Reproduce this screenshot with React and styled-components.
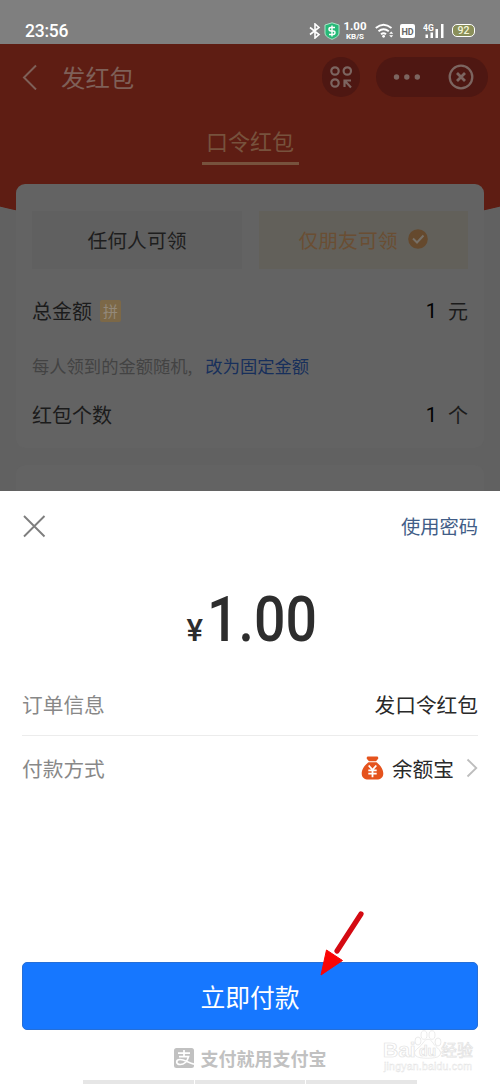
import React from "react";
import styled, { createGlobalStyle } from "styled-components";

const cjk = `"Noto Sans CJK SC", sans-serif`;

const Global = createGlobalStyle`
  * { box-sizing: border-box; }
  body { margin: 0; background: #fff; font-family: ${cjk}; }
  svg { display: block; flex: none; }
`;

const Screen = styled.main`
  position: relative;
  display: flex;
  flex-direction: column;
  width: 500px;
  height: 1084px;
  overflow: hidden;
  background: #fff;
`;

const StatusBar = styled.header`
  display: flex;
  align-items: center;
  height: 44px;
  flex: none;
  padding: 17px 25px 0;
  background: #7f7f7f;
  color: #fff;
`;

const Clock = styled.time`
  font: 500 17.5px/26px Roboto, sans-serif;
  letter-spacing: -0.25px;
  margin-right: auto;
`;

const StatusIcons = styled.div`
  display: flex;
  align-items: center;
`;

const Speed = styled.div`
  display: flex;
  flex-direction: column;
  align-items: center;
  width: 24px;
  margin: 0 8px 0 3px;
  font: 700 11.5px/12px Roboto, sans-serif;
  white-space: nowrap;
`;

const SpeedUnit = styled.span`
  font-size: 8px;
  line-height: 9px;
`;

const Battery = styled.div`
  width: 23px;
  height: 13px;
  margin-left: 8px;
  border: 1.6px solid #fff;
  border-radius: 5px;
  background: #8a8f5a;
  color: #f4f5d8;
  text-align: center;
  font: 500 10.5px/11px Roboto, sans-serif;
`;

const DimmedPage = styled.section`
  display: flex;
  flex-direction: column;
  height: 447px;
  flex: none;
  overflow: hidden;
  background: radial-gradient(ellipse 480px 191px at 250px 0, #5e1d13 99.6%, #616161 100%);
`;

const NavBar = styled.nav`
  display: flex;
  align-items: center;
  height: 66px;
  flex: none;
  padding: 0 12px 0 22px;
`;

const NavTitle = styled.h1`
  margin: 0 auto 0 24px;
  font-size: 24.4px;
  line-height: 36px;
  font-weight: 400;
  color: #7e6058;
`;

const NavPill = styled.div`
  display: flex;
  align-items: center;
  justify-content: ${(p) => (p.$wide ? "space-between" : "center")};
  width: ${(p) => (p.$wide ? 112 : 38)}px;
  height: 40px;
  margin-left: ${(p) => (p.$wide ? 16 : 0)}px;
  padding: ${(p) => (p.$wide ? "0 14px 0 17px" : 0)};
  border-radius: 20px;
  background: #4e1712;
`;

const Tab = styled.div`
  align-self: center;
  flex: none;
  width: 97px;
  height: 55px;
  margin-bottom: 19px;
  padding-top: 13px;
  border-bottom: 3px solid #77523d;
  text-align: center;
  font-size: 22px;
  line-height: 34px;
  color: #77523d;
`;

const Card = styled.div`
  height: ${(p) => p.$height}px;
  flex: none;
  margin: 0 16px ${(p) => (p.$last ? 0 : 17)}px;
  padding: ${(p) => (p.$last ? 0 : "27px 16px 0")};
  border-radius: 9px;
  background: #636363;
`;

const Choices = styled.div`
  display: flex;
  gap: 17px;
  height: 58px;
`;

const Choice = styled.div`
  display: flex;
  align-items: center;
  justify-content: center;
  gap: 11px;
  width: ${(p) => (p.$active ? 209 : 210)}px;
  padding-bottom: 2px;
  background: ${(p) => (p.$active ? "#62605a" : "#606060")};
  color: ${(p) => (p.$active ? "#6a4e33" : "#1e1e1e")};
  font-size: 19.8px;
`;

const FieldRow = styled.div`
  display: flex;
  align-items: center;
  height: 30px;
  margin-top: ${(p) => p.$top}px;
  font-size: 20px;
  line-height: 30px;
  color: #1b1b1b;
`;

const Badge = styled.span`
  display: flex;
  align-items: center;
  justify-content: center;
  width: 21px;
  height: 22px;
  margin-left: 8px;
  border-radius: 2px;
  background: #7c6847;
  color: #93897a;
  font-size: 15px;
`;

const Amount = styled.span`
  margin: 0 11px 0 auto;
  color: #000;
  font: 400 20px/30px Roboto, sans-serif;
`;

const Hint = styled.p`
  margin: 27px 0 0;
  height: 26px;
  font-size: 17.3px;
  line-height: 26px;
  color: #434343;
`;

const HintLink = styled.span`
  margin-left: 13px;
  color: #172f5b;
`;

const Sheet = styled.section`
  display: flex;
  flex-direction: column;
  height: 593px;
  flex: none;
  padding: 0 22px;
  background: #fff;
`;

const SheetHeader = styled.div`
  display: flex;
  align-items: center;
  justify-content: space-between;
  height: 70px;
  flex: none;
  font-size: 19.3px;
  color: #425d87;
`;

const Total = styled.div`
  display: flex;
  align-items: baseline;
  justify-content: center;
  height: 112px;
  flex: none;
  padding-top: 22px;
  color: #2d2d2d;
  font: 500 63px/74px Roboto, sans-serif;
`;

const Currency = styled.span`
  width: 20px;
  margin-left: 1px;
  font-size: 31px;
`;

const Figures = styled.span`
  width: 108px;
  transform: scaleX(0.88);
  transform-origin: left;
`;

const DetailRow = styled.div`
  display: flex;
  align-items: center;
  height: ${(p) => p.$height}px;
  flex: none;
  border-bottom: ${(p) => (p.$line ? "1px solid #ececec" : "0")};
  font-size: 20.7px;
  color: #888;
`;

const DetailValue = styled.span`
  display: flex;
  align-items: center;
  margin-left: auto;
  color: #292929;
`;

const Method = styled.span`
  margin: 0 12px 0 8px;
`;

const PayButton = styled.button`
  height: 68px;
  flex: none;
  margin: 163px 0 0;
  padding: 0;
  border: 1px solid #256fd8;
  border-radius: 5px;
  background: #1677ff;
  color: #fff;
  font: 400 24.8px/66px ${cjk};
`;

const Brand = styled.footer`
  display: flex;
  align-items: center;
  justify-content: center;
  gap: 7px;
  height: 50px;
  padding-top: 5px;
  font-size: 18px;
  font-weight: 700;
  color: #c1c1c1;
`;

const NextStrip = styled.div`
  display: flex;
  gap: 1px;
  height: 4px;
  flex: none;
  margin: 0 61px 0 61px;
`;

const StripCell = styled.span`
  width: 111px;
  background: #e6e6e6;
`;

const Pointer = styled.svg`
  position: absolute;
  left: 314px;
  top: 906px;
`;

const Watermark = styled.svg`
  position: absolute;
  left: 380px;
  top: 1028px;
`;

const BluetoothIcon = () => (
  <svg width="12" height="16" viewBox="0 0 12 16" fill="none" stroke="#fff" strokeWidth="1.6">
    <path d="M1 4.5 10 11.5 6 15V1l4 3.5L1 11.5" />
  </svg>
);

const ShieldIcon = () => (
  <svg width="16" height="18" viewBox="0 0 16 18" style={{ marginLeft: 3 }}>
    <path d="M8 .8 15 3v8c0 3-3.5 5-7 6.3C4.500 16 1 14 1 11V3Z" fill="#27b978" stroke="#a8e6c8" />
    <path d="M11 5.500H7q-2 0-2 1.700T7 9h2q2 0 2 1.700t-2 1.800H5M8 3.500v11" fill="none" stroke="#fff" strokeWidth="1.400" />
  </svg>
);

const WifiIcon = () => (
  <svg width="19" height="15" viewBox="0 0 19 15" fill="none" stroke="#fff" strokeWidth="1.900">
    <path d="M.8 5Q8.500-1.600 16.500 5M3.500 8.300q5-4.300 10.300 0M6 11.300q2.600-2.200 5 0" />
    <circle cx="8.600" cy="13.300" r="1.400" fill="#fff" stroke="none" />
    <path d="m14.200 10.800 2-2.300 2 2.300Zm0 1.500 2 2.300 2-2.300Z" fill="#fff" stroke="none" />
  </svg>
);

const HdIcon = () => (
  <svg width="15" height="14" viewBox="0 0 15 14" style={{ marginLeft: 6 }}>
    <rect width="15" height="14" rx="2" fill="#fff" />
    <text x="7.500" y="10.500" textAnchor="middle" fontFamily="Roboto" fontWeight="700" fontSize="9" fill="#666">HD</text>
  </svg>
);

const SignalIcon = () => (
  <svg width="21" height="16" viewBox="0 0 21 16" fill="#fff" style={{ marginLeft: 8 }}>
    <text x="0" y="8" fontFamily="Roboto" fontWeight="700" fontSize="8.500">4G</text>
    <path d="M2.500 11.500h2.500v3.500H2.500ZM7.500 9.500H10V15H7.500ZM12.500 6H15v9h-2.500ZM18 1h2.500v14H18Z" />
  </svg>
);

const BackIcon = () => (
  <svg width="15" height="26" viewBox="0 0 15 26" fill="none" stroke="#7e6058" strokeWidth="2">
    <path d="M14 1.500 2 13.500l12 12" />
  </svg>
);

const AppsIcon = () => (
  <svg width="24" height="24" viewBox="0 0 24 24" fill="none" stroke="#7c6560" strokeWidth="2.200">
    <circle cx="6" cy="6" r="3.700" />
    <circle cx="18.300" cy="6" r="3.700" />
    <circle cx="6" cy="18" r="3.700" />
    <path d="M15.500 22v-6.500H22M16 16l6 6.500" />
  </svg>
);

const MoreIcon = () => (
  <svg width="28" height="8" viewBox="0 0 28 8" fill="#7c6560">
    <circle cx="3.500" cy="4" r="2.700" />
    <circle cx="13.800" cy="4" r="2.700" />
    <circle cx="24.300" cy="4" r="2.700" />
  </svg>
);

const CloseCircleIcon = () => (
  <svg width="26" height="26" viewBox="0 0 26 26" fill="none" stroke="#7c6560" strokeWidth="2.300">
    <circle cx="13" cy="13" r="11.300" />
    <path d="m9 9 8 8m0-8-8 8" strokeWidth="2.800" />
  </svg>
);

const CheckIcon = () => (
  <svg width="20" height="20" viewBox="0 0 20 20">
    <circle cx="10" cy="10" r="9.800" fill="#65492d" />
    <path d="m5 9.500 4 4 6.500-7" fill="none" stroke="#777067" strokeWidth="2" />
  </svg>
);

const CloseIcon = () => (
  <svg width="24" height="24" viewBox="0 0 24 24" fill="none" stroke="#7e7e7e" strokeWidth="1.900">
    <path d="m2 2 20.500 20.500M22.500 2 2 22.500" />
  </svg>
);

const MoneyBagIcon = () => (
  <svg width="23" height="24" viewBox="0 0 23 24">
    <path d="M6.500.5h10q1.500 1.300.2 2.800L15 5.200H8L6.200 3.300Q5 1.800 6.500.5ZM7.500 6.300h8c4 3 6.800 7.300 6.800 11.200 0 4-3 6-6.500 6H7.200c-3.500 0-6.500-2-6.500-6 0-3.900 2.800-8.200 6.800-11.200Z" fill="#e5531d" />
    <path d="m7.700 9.500 3.800 4.300 3.800-4.300M11.500 13.500v7.700M7.300 14.300h8.400M7.300 17.600h8.400" fill="none" stroke="#fff" strokeWidth="1.800" />
  </svg>
);

const ChevronIcon = () => (
  <svg width="12" height="20" viewBox="0 0 12 20" fill="none" stroke="#bdbdbd" strokeWidth="1.800">
    <path d="m1.500 1.500 8.800 8.500-8.800 8.500" />
  </svg>
);

const AlipayIcon = () => (
  <svg width="20" height="20" viewBox="0 0 20 20">
    <rect width="20" height="20" rx="2.500" fill="#c1c1c1" />
    <path d="M4 5.200h12M10 2v6.500M5 8.700h9.500c-1.200 4.500-4.500 7.800-8.200 7.800-5 0-4.500-5-.3-5 4.300 0 8 3 14 4.700" fill="none" stroke="#fff" strokeWidth="1.700" />
  </svg>
);

export default function App() {
  return (
    <Screen>
      <Global />
      <StatusBar>
        <Clock>23:56</Clock>
        <StatusIcons>
          <BluetoothIcon />
          <ShieldIcon />
          <Speed>
            <span>1.00</span>
            <SpeedUnit>KB/S</SpeedUnit>
          </Speed>
          <WifiIcon />
          <HdIcon />
          <SignalIcon />
          <Battery>92</Battery>
        </StatusIcons>
      </StatusBar>

      <DimmedPage>
        <NavBar>
          <BackIcon />
          <NavTitle>发红包</NavTitle>
          <NavPill><AppsIcon /></NavPill>
          <NavPill $wide>
            <MoreIcon />
            <CloseCircleIcon />
          </NavPill>
        </NavBar>
        <Tab>口令红包</Tab>
        <Card $height={264}>
          <Choices>
            <Choice>任何人可领</Choice>
            <Choice $active>仅朋友可领<CheckIcon /></Choice>
          </Choices>
          <FieldRow $top={27}>
            总金额<Badge>拼</Badge>
            <Amount>1</Amount>元
          </FieldRow>
          <Hint>每人领到的金额随机,<HintLink>改为固定金额</HintLink></Hint>
          <FieldRow $top={21}>
            红包个数
            <Amount>1</Amount>个
          </FieldRow>
        </Card>
        <Card $height={40} $last />
      </DimmedPage>

      <Sheet>
        <SheetHeader>
          <CloseIcon />
          <span>使用密码</span>
        </SheetHeader>
        <Total>
          <Currency>¥</Currency>
          <Figures>1.00</Figures>
        </Total>
        <DetailRow $height={63} $line>
          订单信息
          <DetailValue>发口令红包</DetailValue>
        </DetailRow>
        <DetailRow $height={63}>
          付款方式
          <DetailValue>
            <MoneyBagIcon />
            <Method>余额宝</Method>
            <ChevronIcon />
          </DetailValue>
        </DetailRow>
        <PayButton>立即付款</PayButton>
        <Brand>
          <AlipayIcon />
          支付就用支付宝
        </Brand>
        <NextStrip>
          <StripCell />
          <StripCell />
          <StripCell />
        </NextStrip>
      </Sheet>

      <Pointer width="54" height="72" viewBox="0 0 54 72">
        <path d="M47 8 23 45" stroke="#d40a12" strokeWidth="5.200" strokeLinecap="round" />
        <path d="M7 69 12.500 44l16 10.500Z" fill="#fa0505" stroke="#fa0505" strokeLinejoin="round" />
      </Pointer>

      <Watermark width="100" height="48" viewBox="0 0 100 48" fill="#fff" stroke="#e2e2e2" strokeWidth="0.700">
        <text x="3" y="29" fontFamily="Liberation Sans" fontWeight="700" fontSize="21">Bai</text>
        <path d="M36 28c-5-5 4-8 7-13 3-5 7-5 10 0 3 5 11 8 6 13-3 3-20 3-23 0Z" />
        <ellipse cx="38" cy="13" rx="3" ry="4" />
        <ellipse cx="44" cy="7" rx="3" ry="4.300" />
        <ellipse cx="52" cy="7" rx="3" ry="4.300" />
        <ellipse cx="58" cy="14" rx="3" ry="4" />
        <text x="39" y="28" fontFamily="Liberation Sans" fontWeight="700" fontSize="14">du</text>
        <text x="61" y="28" fontFamily="Noto Sans CJK SC" fontWeight="400" fontSize="16">经验</text>
        <text x="4" y="42" fontFamily="Liberation Sans" fontSize="10.500" textLength="88" strokeWidth="0.400">jingyan.baidu.com</text>
      </Watermark>
    </Screen>
  );
}
